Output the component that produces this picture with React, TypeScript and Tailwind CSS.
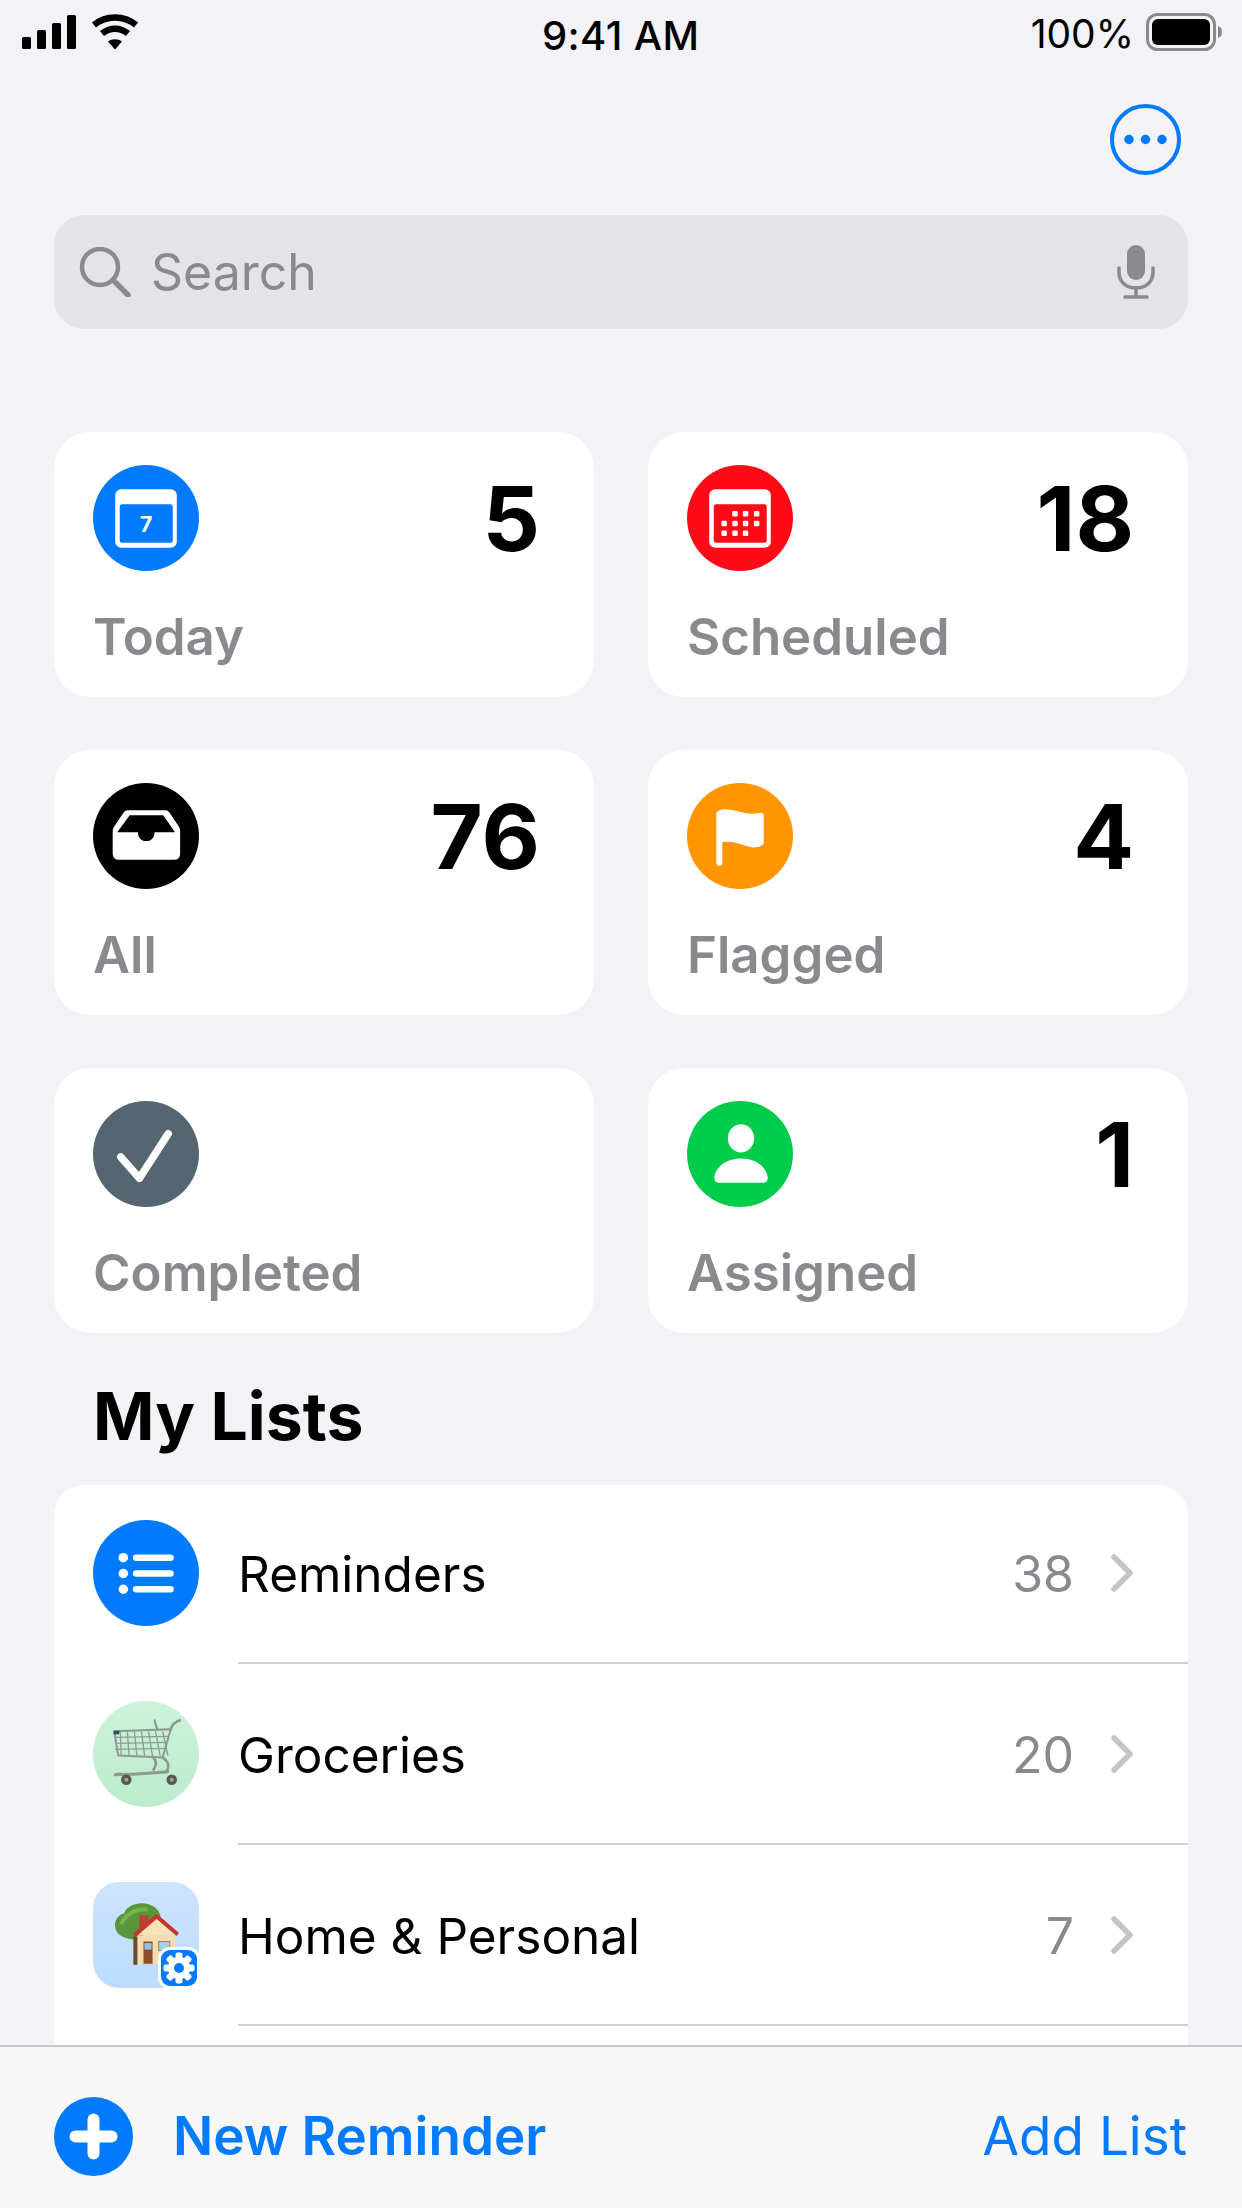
import React from "react";

function Signal() {
  return (
    <svg width="54" height="34" viewBox="0 0 54 34" fill="#000">
      <rect x="0" y="22" width="9" height="12" rx="1.5" />
      <rect x="15" y="15" width="9" height="19" rx="1.5" />
      <rect x="30" y="8" width="9" height="26" rx="1.5" />
      <rect x="45" y="0" width="9" height="34" rx="1.5" />
    </svg>
  );
}

function Wifi() {
  return (
    <svg width="48" height="36" viewBox="0 0 48 36" fill="none" stroke="#000" strokeWidth="6.5">
      <path d="M3 11 C15 1 33 1 45 11" />
      <path d="M11 19.5 C19 13 29 13 37 19.5" />
      <path d="M24 35.5 L17 27.5 C21 24.5 27 24.5 31 27.5 Z" fill="#000" stroke="none" />
    </svg>
  );
}

function Battery() {
  return (
    <svg width="76" height="38" viewBox="0 0 76 38" fill="none">
      <rect x="1.5" y="1.5" width="67" height="35" rx="10" stroke="#8a8a8e" strokeWidth="3" />
      <rect x="6" y="6" width="58" height="26" rx="6" fill="#000" />
      <path d="M72 13 C75 14 76 16 76 19 C76 22 75 24 72 25 Z" fill="#8a8a8e" />
    </svg>
  );
}

function SearchGlyph() {
  return (
    <svg width="52" height="50" viewBox="0 0 52 50" fill="none" stroke="#8a8a8e" strokeWidth="4.5" strokeLinecap="round">
      <circle cx="21" cy="20" r="18" />
      <path d="M34 33 L49 48" strokeWidth="5.5" />
    </svg>
  );
}

function Mic() {
  return (
    <svg width="38" height="54" viewBox="0 0 38 54" fill="none" stroke="#8a8a8e" strokeWidth="3.5" strokeLinecap="round">
      <rect x="10" y="0" width="18" height="35" rx="9" fill="#8a8a8e" stroke="none" />
      <path d="M2 23 V27 C2 37 9 43 19 43 C29 43 36 37 36 27 V23" />
      <path d="M19 43 V51" />
      <path d="M8 52 H30" />
    </svg>
  );
}

function Circle({ bg, children }: { bg: string; children: React.ReactNode }) {
  return (
    <svg width="106" height="106" viewBox="0 0 105 105" className="block shrink-0">
      <circle cx="52.5" cy="52.5" r="52.5" fill={bg} />
      {children}
    </svg>
  );
}

function CalendarFrame({ bg, children }: { bg: string; children: React.ReactNode }) {
  return (
    <>
      <rect x="22" y="24" width="61" height="58" rx="6" fill="#fff" />
      <rect x="26.5" y="39" width="52.5" height="38" rx="2.5" fill={bg} />
      {children}
    </>
  );
}

const todayIcon = (
  <Circle bg="#007aff">
    <CalendarFrame bg="#007aff">
      <text x="52.7" y="66" textAnchor="middle" fill="#fff" fontFamily="Inter, sans-serif" fontWeight="700" fontSize="21">7</text>
    </CalendarFrame>
  </Circle>
);

const dots: [number, number][] = [
  [47.5, 48.3], [58, 48.3], [69, 48.3],
  [36.8, 58], [47.5, 58], [58, 58], [69, 58],
  [36.8, 67.7], [47.5, 67.7], [58, 67.7],
];

const scheduledIcon = (
  <Circle bg="#ff0b17">
    <CalendarFrame bg="#ff0b17">
      {dots.map(([x, y]) => (
        <rect key={`${x}-${y}`} x={x - 2.7} y={y - 2.7} width="5.4" height="5.4" rx="1.3" fill="#fff" />
      ))}
    </CalendarFrame>
  </Circle>
);

const allIcon = (
  <Circle bg="#000">
    <path d="M34 27 H72 Q74 27 75.5 29 L85 43 Q86.3 45 86.3 48 V70 Q86.3 76 80 76 H26 Q19.5 76 19.5 70 V48 Q19.5 45 21 43 L30.5 29 Q32 27 34 27 Z" fill="#fff" />
    <path d="M36.3 32 H69.5 L81.3 48.7 H61 C61 60.5 44.5 60.5 44.5 48.7 H24 Z" fill="#000" />
  </Circle>
);

const flaggedIcon = (
  <Circle bg="#ff9500">
    <path d="M29 31 C29 28 33 26 38 26 C48 26 58 32 70 30 L73 29.5 Q76 29.5 76 32 V60 C74 63 70 64 65 64 C55 62 48 57 35 58.5 V79 Q35 82 32 82 Q29 82 29 79 Z" fill="#fff" />
  </Circle>
);

const completedIcon = (
  <Circle bg="#546672">
    <path d="M27.5 55.5 L46 76.5 L74.5 32.5" fill="none" stroke="#fff" strokeWidth="7.5" strokeLinecap="round" strokeLinejoin="round" />
  </Circle>
);

const assignedIcon = (
  <Circle bg="#00cc4b">
    <ellipse cx="53.5" cy="37" rx="13" ry="14" fill="#fff" />
    <path d="M27 76 C28 66 38 57 53.5 57 C69 57 79 66 80 76 Q80 81 75 81 H32 Q27 81 27 76 Z" fill="#fff" />
  </Circle>
);

const remindersIcon = (
  <Circle bg="#007aff">
    {[37.3, 53, 68.6].map((y) => (
      <g key={y} fill="#fff">
        <circle cx="30" cy={y} r="4.7" />
        <rect x="39.5" y={y - 3.2} width="40.5" height="6.4" rx="3.2" />
      </g>
    ))}
  </Circle>
);

function CartIcon() {
  const v = [27, 34, 41, 48, 55, 62, 69];
  const h = [36, 42, 48];
  return (
    <svg width="106" height="106" viewBox="0 0 105 105" className="block shrink-0">
      <defs>
        <linearGradient id="cartBg" x1="0" y1="0" x2="0" y2="1">
          <stop offset="0" stopColor="#cdf2da" />
          <stop offset="1" stopColor="#bcecca" />
        </linearGradient>
      </defs>
      <circle cx="52.5" cy="52.5" r="52.5" fill="url(#cartBg)" />
      <g fill="none" stroke="#8f9a94" strokeWidth="1.3">
        {v.map((x) => (
          <path key={x} d={`M${x} 30 L${x + (x - 27) * 0.1 + 1} 54`} />
        ))}
        {h.map((y) => (
          <path key={y} d={`M${22} ${y} L${75 - (y - 36) * 0.3} ${y - 1}`} />
        ))}
      </g>
      <g fill="none" stroke="#8e9792" strokeWidth="2" strokeLinecap="round" strokeLinejoin="round">
        <path d="M21 30 L77 28 L69 56 L25 54 Z" />
        <path d="M77 28 C78 24 80 21 86 19" strokeWidth="2.6" />
        <path d="M64 28 C62 25 62 23 61 19" />
        <path d="M59 55 C64 60 63 64 60 68 M69 56 C75 60 76 64 73 70" strokeWidth="2.6" />
        <path d="M22 73 C40 73 60 71 74 70" strokeWidth="3" />
        <path d="M22 73 C27 71 30 72 33 75" strokeWidth="2.4" />
      </g>
      <rect x="20.5" y="29.5" width="5.5" height="3.5" fill="#2c4f74" />
      <circle cx="33" cy="78" r="5.2" fill="#5b5653" />
      <circle cx="33" cy="78" r="2" fill="#a5a19d" />
      <circle cx="78" cy="78" r="5.2" fill="#5b5653" />
      <circle cx="78" cy="78" r="2" fill="#a5a19d" />
    </svg>
  );
}

function HomeIcon() {
  const teeth = [0, 45, 90, 135];
  return (
    <div className="relative w-[106px] h-[106px] shrink-0">
      <svg width="106" height="106" viewBox="0 0 105 105" className="block">
        <defs>
          <linearGradient id="homeBg" x1="0" y1="0" x2="0" y2="1">
            <stop offset="0" stopColor="#cde4fd" />
            <stop offset="1" stopColor="#bcdcff" />
          </linearGradient>
        </defs>
        <rect width="105" height="105" rx="26" fill="url(#homeBg)" />
        <path d="M24 50 C19 42 23 33 31 31 C33 23 46 19 55 22 C62 24 66 29 67 34 L46 57 C36 57 28 55 24 50 Z" fill="#57963a" />
        <path d="M28 42 C31 33 42 26 54 27" fill="none" stroke="#74b451" strokeWidth="4" />
        <rect x="46" y="33" width="9" height="13" fill="#b8432f" />
        <rect x="43" y="53" width="38" height="28" fill="#f5dcae" />
        <rect x="40" y="54" width="4" height="28" fill="#6f4a28" />
        <path d="M41 53 L63 34 L84 52" fill="#f8e3b6" stroke="#c5362c" strokeWidth="4" strokeLinejoin="round" />
        <rect x="50" y="59" width="9" height="22" fill="#8a4f28" />
        <rect x="51" y="60.5" width="7" height="6.5" fill="#8fc4e6" />
        <rect x="65" y="59" width="11" height="9" fill="#9fd0ee" stroke="#a08060" strokeWidth="1" />
      </svg>
      <div className="absolute right-[-1px] bottom-[-1px] w-[42px] h-[42px] rounded-[12px] bg-[#007aff] border-[3px] border-white flex items-center justify-center">
        <svg width="32" height="32" viewBox="0 0 32 32">
          {teeth.map((a) => (
            <rect key={a} x="12.5" y="0.5" width="7" height="31" rx="2" fill="#fff" transform={`rotate(${a} 16 16)`} />
          ))}
          <circle cx="16" cy="16" r="11" fill="#fff" />
          <circle cx="16" cy="16" r="5" fill="#007aff" />
        </svg>
      </div>
    </div>
  );
}

function Tile({ icon, label, count }: { icon: React.ReactNode; label: string; count?: string }) {
  return (
    <div className="h-[265px] bg-white rounded-[36px] pt-[33px] pl-[39px] pr-[54px]">
      <div className="flex items-center justify-between h-[106px]">
        {icon}
        {count && <span className="text-[90px] leading-[105px] font-bold text-black">{count}</span>}
      </div>
      <div className="mt-[36px] text-[51px] leading-[60px] font-semibold text-[#8a8a8e]">{label}</div>
    </div>
  );
}

function Row({ icon, label, count }: { icon: React.ReactNode; label: string; count?: string }) {
  return (
    <div className="flex h-[181px] pl-[39px]">
      <div className="h-[180px] flex items-center pr-[39px]">{icon}</div>
      <div className="flex-1 flex items-center pr-[55px] border-b-2 border-[#cfcfd1]">
        <span className="flex-1 mt-[2px] text-[49.5px] leading-[60px] text-black">{label}</span>
        <span className="mt-[2px] text-[50px] leading-[60px] text-[#8a8a8e]">{count}</span>
        <svg width="22" height="38" viewBox="0 0 22 38" fill="none" stroke="#c4c4c7" strokeWidth="5.5" strokeLinecap="round" strokeLinejoin="round" className="ml-[37px]">
          <path d="M3 3 L19 19 L3 35" />
        </svg>
      </div>
    </div>
  );
}

export default function App() {
  return (
    <div className="w-[1242px] h-[2208px] overflow-hidden flex flex-col bg-[#f2f2f7] font-['Inter',sans-serif]">
      <main className="flex-1 min-h-0 overflow-hidden">
        <div className="relative h-[64px] flex items-center justify-between pl-[22px] pr-[20px]">
          <div className="flex items-center gap-[15px]">
            <Signal />
            <Wifi />
          </div>
          <span className="absolute left-[542px] top-[13px] text-[40px] leading-[46px] font-medium tracking-[0.01em] text-black">9:41 AM</span>
          <div className="flex items-center gap-[12px]">
            <span className="mt-[3px] text-[39px] leading-[46px] text-black">100%</span>
            <Battery />
          </div>
        </div>

        <div className="flex justify-end pt-[40px] pr-[61px]">
          <svg width="71" height="71" viewBox="0 0 71 71" fill="none" className="block">
            <circle cx="35.5" cy="35.5" r="33.5" stroke="#007aff" strokeWidth="4" />
            <circle cx="19" cy="35.5" r="4.7" fill="#007aff" />
            <circle cx="35.5" cy="35.5" r="4.7" fill="#007aff" />
            <circle cx="52" cy="35.5" r="4.7" fill="#007aff" />
          </svg>
        </div>

        <div className="mx-[54px] mt-[40px] h-[114px] rounded-[30px] bg-[#e3e3e8] flex items-center pl-[25px] pr-[33px]">
          <SearchGlyph />
          <span className="flex-1 ml-[20px] text-[50px] leading-[60px] text-[#8a8a8e]">Search</span>
          <Mic />
        </div>

        <div className="grid grid-cols-2 gap-x-[54px] gap-y-[53px] px-[54px] mt-[103px]">
          <Tile icon={todayIcon} label="Today" count="5" />
          <Tile icon={scheduledIcon} label="Scheduled" count="18" />
          <Tile icon={allIcon} label="All" count="76" />
          <Tile icon={flaggedIcon} label="Flagged" count="4" />
          <Tile icon={completedIcon} label="Completed" />
          <Tile icon={assignedIcon} label="Assigned" count="1" />
        </div>

        <h2 className="ml-[93px] mt-[46px] text-[66px] leading-[74px] font-bold text-black">My Lists</h2>

        <div className="flow-root mx-[54px] mt-[32px] bg-white rounded-t-[30px] pb-[200px]">
          <div className="-mt-[2px]">
            <Row icon={remindersIcon} label="Reminders" count="38" />
            <Row icon={<CartIcon />} label="Groceries" count="20" />
            <Row icon={<HomeIcon />} label="Home & Personal" count="7" />
          </div>
        </div>
      </main>

      <footer className="h-[163px] shrink-0 bg-[#f7f7f8] border-t-2 border-[#c8c8ca] flex items-center pl-[54px] pr-[55px] pt-[17px]">
        <svg width="79" height="79" viewBox="0 0 79 79" className="block shrink-0">
          <circle cx="39.5" cy="39.5" r="39.5" fill="#007aff" />
          <rect x="15.5" y="33.5" width="48" height="12" rx="6" fill="#fff" />
          <rect x="33.5" y="16.5" width="12" height="46" rx="6" fill="#fff" />
        </svg>
        <span className="flex-1 ml-[40px] text-[53px] leading-[60px] font-semibold text-[#007aff]">New Reminder</span>
        <span className="text-[53px] leading-[60px] text-[#007aff]">Add List</span>
      </footer>
    </div>
  );
}
